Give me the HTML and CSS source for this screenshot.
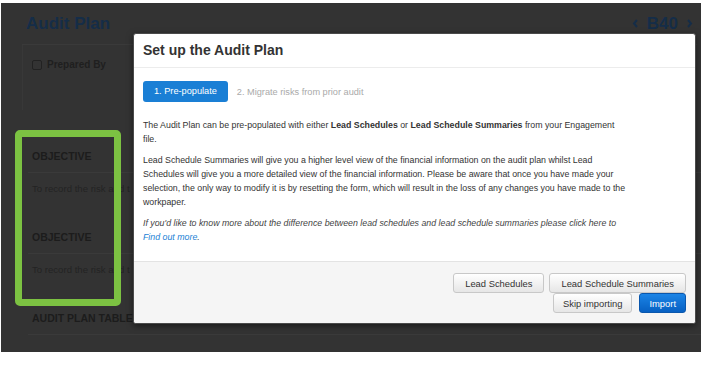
FILE: index.html
```html
<!DOCTYPE html>
<html lang="en">
<head>
  <meta charset="UTF-8" />
  <title>Audit Plan</title>
  <link rel="stylesheet" href="styles.css">
</head>
<body>
  <div class="frame">
    <div class="page-head">
      <h1>Audit Plan</h1>
      <div class="pager">
        <svg width="7" height="9" viewBox="0 0 7 9"><polyline points="5,1 2,4.5 5,8" /></svg>
        <span>B40</span>
        <svg width="7" height="9" viewBox="0 0 7 9"><polyline points="2,1 5,4.5 2,8" /></svg>
      </div>
    </div>

    <div class="panel">
      <label class="check"><span class="box"></span>Prepared By</label>
    </div>

    <div class="plan">
      <div class="section">
        <div class="sec-title">OBJECTIVE</div>
        <div class="sec-text">To record the risk and t</div>
      </div>
      <div class="section">
        <div class="sec-title">OBJECTIVE</div>
        <div class="sec-text">To record the risk and t</div>
      </div>
      <div class="section">
        <div class="sec-title">AUDIT PLAN TABLE</div>
      </div>
    </div>

    <div class="highlight"></div>

    <div class="modal">
      <div class="modal-head">Set up the Audit Plan</div>
      <div class="modal-body">
        <div class="steps">
          <span class="step active">1. Pre-populate</span>
          <span class="step">2. Migrate risks from prior audit</span>
        </div>
        <p>The Audit Plan can be pre-populated with either <b>Lead Schedules</b> or <b>Lead Schedule Summaries</b> from your Engagement<br>file.</p>
        <p>Lead Schedule Summaries will give you a higher level view of the financial information on the audit plan whilst Lead Schedules will give you a more detailed view of the financial information. Please be aware that once you have made your selection, the only way to modify it is by resetting the form, which will result in the loss of any changes you have made to the workpaper.</p>
        <p class="note">If you'd like to know more about the difference between lead schedules and lead schedule summaries please click here to <a href="#">Find out more</a>.</p>
      </div>
      <div class="modal-foot">
        <div class="row">
          <button class="btn">Lead Schedules</button>
          <button class="btn">Lead Schedule Summaries</button>
        </div>
        <div class="row wide">
          <button class="btn">Skip importing</button>
          <button class="btn primary">Import</button>
        </div>
      </div>
    </div>
  </div>
</body>
</html>
```

FILE: styles.css
```css
body { margin: 0; background: #fff; font-family: "Liberation Sans", Arial, sans-serif; }
.frame {
  position: relative; width: 700px; height: 349px;
  margin: 3px 0 0 1px; background: #333; overflow: hidden;
}

/* dimmed page behind the dialog */
.page-head {
  display: flex; justify-content: space-between; align-items: center;
  height: 41px; margin: 0 4px 0 21px; padding: 0 4px;
  border-bottom: 1px solid #3a3a3a;
}
.page-head h1 { margin: 0; font-size: 17px; font-weight: bold; color: #152d48; }
.pager { display: flex; align-items: center; gap: 8px; font-size: 17px; font-weight: bold; color: #152d48; }
.pager svg polyline { fill: none; stroke: #152d48; stroke-width: 2; }
.panel {
  height: 65px; box-sizing: border-box; padding: 14px 9px;
  margin: 0 4px 0 21px; border-left: 1px solid #383838;
}
.check { display: flex; align-items: center; gap: 5px; font-size: 10px; font-weight: bold; color: #1f1f1f; }
.box { width: 8px; height: 8px; border: 1px solid #222; border-radius: 2px; }
.plan { margin-top: 39px; padding-left: 31px; }
.section { height: 81px; }
.sec-title {
  font-size: 10.5px; font-weight: bold; line-height: 14px; color: #1c1c1c;
  padding-bottom: 9px; border-bottom: 1px solid #3a3a3a; margin-left: -4px; padding-left: 4px;
}
.sec-text {
  white-space: nowrap;
  font-size: 9.6px; line-height: 14px; padding-top: 9px; color: #232323;
}

.highlight {
  position: absolute; left: 14px; top: 127px; width: 106px; height: 176px;
  box-sizing: border-box; border: 7px solid #7cc242; border-radius: 5px;
}

/* dialog */
.modal {
  position: absolute; left: 132px; top: 30px; width: 563px; box-sizing: border-box;
  background: #fff; border: 1px solid #4a4a4a; border-radius: 3px; overflow: hidden;
  box-shadow: 0 2px 6px rgba(0,0,0,0.5); color: #333;
}
.modal-head {
  height: 33px; line-height: 33px; padding: 0 9px;
  border-bottom: 1px solid #ececec; font-size: 14px; font-weight: bold; color: #333;
}
.modal-body { padding: 13px 10px 10px 9px; font-size: 8.8px; }
.steps { display: flex; align-items: center; gap: 9px; margin-bottom: 16px; font-size: 9.2px; }
.step { color: #aaa; }
.step.active {
  height: 21px; line-height: 21px; padding: 0 11px;
  background: #1a7fd5; color: #fff; border-radius: 3px;
}
.modal-body p { margin: 0 0 7px; line-height: 14px; max-width: 487px; }
.modal-body p.note { font-style: italic; color: #444; }
.note a { color: #1a7fd5; text-decoration: none; }
.modal-foot {
  background: #f5f5f5; border-top: 1px solid #e3e3e3;
  padding: 11px 9px 10px;
}
.row { display: flex; justify-content: flex-end; gap: 5px; }
.row.wide { gap: 7px; }
.btn {
  height: 20px; box-sizing: border-box; padding: 0 11px;
  font-family: inherit; font-size: 9.4px; color: #333;
  background: linear-gradient(#fff, #e6e6e6); border: 1px solid #c8c8c8; border-radius: 3px;
}
.row.wide .btn { padding: 0 9px; }
.btn.primary {
  color: #fff; background: linear-gradient(#1b84e6, #0760c2); border-color: #0a57ad;
}
```
